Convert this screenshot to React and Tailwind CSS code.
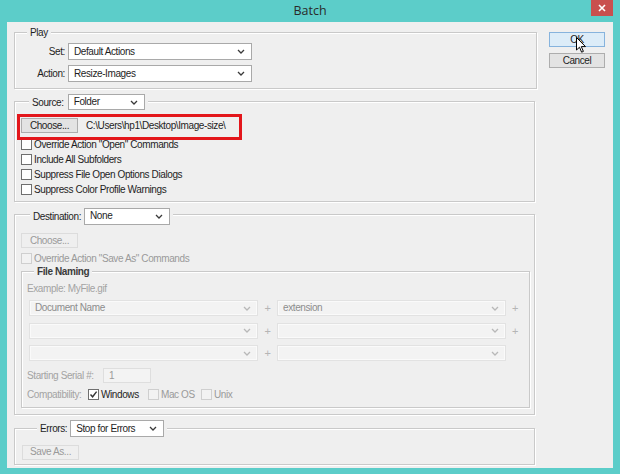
import React from "react";

function Chevron({ disabled }) {
  return (
    <svg width="8" height="5" viewBox="0 0 8 5" className="shrink-0">
      <path d="M1 1 L4 4 L7 1" fill="none" stroke={disabled ? "#b8b8b8" : "#3a3a3a"} strokeWidth="1.3" />
    </svg>
  );
}

function Select({ value, className, disabled }) {
  return (
    <div
      className={
        "flex items-center justify-between pl-[5px] pr-[6px] " +
        (disabled
          ? "border border-[#e2e2e2] bg-[#f3f3f3] text-[#8d8d8d] shadow-[inset_0_0_0_1px_#fafafa] "
          : "border border-[#a9a9a9] bg-white text-[#1e1e1e] ") +
        className
      }
    >
      <span className="leading-none">{value}</span>
      <Chevron disabled={disabled} />
    </div>
  );
}

function Check({ label, checked, disabled, className }) {
  return (
    <div className={"flex items-center gap-[2px] " + (className || "")}>
      <div
        className={
          "flex h-[11px] w-[11px] shrink-0 items-center justify-center " +
          (disabled ? "border border-[#cfcfcf] bg-[#f2f2f2]" : "border border-[#6f6f6f] bg-white")
        }
      >
        {checked && (
          <svg width="9" height="9" viewBox="0 0 9 9">
            <path d="M1.5 4.5 L3.6 6.8 L7.6 1.6" fill="none" stroke="#333" strokeWidth="1.4" />
          </svg>
        )}
      </div>
      <span className={"leading-none " + (disabled ? "text-[#9a9a9a]" : "text-[#1e1e1e]")}>{label}</span>
    </div>
  );
}

function Btn({ label, className, disabled }) {
  return (
    <div
      className={
        "flex items-center justify-center leading-none " +
        (disabled
          ? "border border-[#dcdcdc] bg-[#efefef] text-[#9a9a9a] "
          : "border border-[#adadad] bg-[#e3e3e3] text-[#1e1e1e] ") +
        className
      }
    >
      {label}
    </div>
  );
}

const groupBox = "border border-[#c9c9c9] shadow-[inset_1px_1px_0_#ffffff,1px_1px_0_#ffffff] ";

export default function App() {
  return (
    <div className="flex h-[474px] w-[620px] flex-col bg-[#5ccdc9] font-['Liberation_Sans',Arial,sans-serif] text-[10px] tracking-[-0.4px]">
      {/* Title bar */}
      <div className="relative flex h-[22px] shrink-0 items-center justify-center">
        <span className="font-['Open_Sans',sans-serif] text-[12.5px] tracking-normal text-[#2a2a2a]">Batch</span>
        <div className="absolute right-[7px] top-0 flex h-[16px] w-[22px] items-center justify-center bg-[#c9504f]">
          <svg width="8" height="8" viewBox="0 0 8 8">
            <path d="M1 1 L7 7 M7 1 L1 7" stroke="#ffffff" strokeWidth="1.6" />
          </svg>
        </div>
      </div>

      {/* Client area */}
      <div className="mx-[7px] mb-[7px] flex flex-1 gap-[12px] bg-[#efefef] pl-[7px] pt-[10px] pb-[3px]">
        {/* Left column */}
        <div className="flex w-[523px] flex-col">
          {/* Play */}
          <div className={groupBox + "flex flex-col pb-[6px]"}>
            <div className="-mt-[7px] ml-[12px] flex h-[12px] w-fit items-center bg-[#efefef] px-[3px] text-[#1e1e1e]">
              Play
            </div>
            <div className="mt-[5px] flex items-center gap-[3px]">
              <span className="w-[50px] text-right text-[#1e1e1e]">Set:</span>
              <Select value="Default Actions" className="h-[17px] w-[184px]" />
            </div>
            <div className="mt-[5px] flex items-center gap-[3px]">
              <span className="w-[50px] text-right text-[#1e1e1e]">Action:</span>
              <Select value="Resize-Images" className="h-[17px] w-[184px]" />
            </div>
          </div>

          {/* Source */}
          <div className={groupBox + "relative mt-[12px] mr-[2px] flex flex-col pb-[4px]"}>
            <div className="-mt-[8px] ml-[14px] flex h-[16px] w-fit items-center gap-[4px] bg-[#efefef] px-[3px]">
              <span className="text-[#1e1e1e]">Source:</span>
              <Select value="Folder" className="h-[16px] w-[77px]" />
            </div>
            <div className="mt-[8px] flex items-center gap-[8px] pl-[6px]">
              <Btn label="Choose..." className="h-[15px] w-[57px]" />
              <span className="text-[#1e1e1e]">C:\Users\hp1\Desktop\Image-size\</span>
            </div>
            <div className="mt-[4px] flex flex-col pl-[6px]">
              <Check label={'Override Action "Open" Commands'} className="h-[15px]" />
              <Check label="Include All Subfolders" className="h-[15px]" />
              <Check label="Suppress File Open Options Dialogs" className="h-[15px]" />
              <Check label="Suppress Color Profile Warnings" className="h-[15px]" />
            </div>
            {/* red annotation */}
            <div className="pointer-events-none absolute left-[2px] top-[12px] h-[26px] w-[225px] border-[3px] border-[#e3161b]" />
          </div>

          {/* Destination */}
          <div className={groupBox + "mt-[12px] mr-[2px] flex flex-col pb-[6px]"}>
            <div className="-mt-[7px] ml-[15px] flex h-[16px] w-fit items-center gap-[3px] bg-[#efefef] px-[3px]">
              <span className="text-[#1e1e1e]">Destination:</span>
              <Select value="None" className="h-[17px] w-[86px]" />
            </div>
            <div className="mt-[9px] pl-[6px]">
              <Btn label="Choose..." disabled className="h-[15px] w-[57px]" />
            </div>
            <div className="mt-[3px] pl-[6px]">
              <Check label={'Override Action "Save As" Commands'} disabled className="h-[15px]" />
            </div>
            {/* File naming */}
            <div className={groupBox + "ml-[6px] mt-[5px] flex w-[509px] flex-col pb-[5px]"}>
              <div className="-mt-[7px] ml-[12px] flex h-[12px] w-fit items-center bg-[#efefef] px-[3px] font-bold text-[#3a3a3a]">
                File Naming
              </div>
              <div className="mt-[5px] flex h-[12px] items-center pl-[5px] text-[#a3a3a3]">Example: MyFile.gif</div>
              <div className="mt-[6px] flex flex-col gap-[6px] pl-[7px]">
                {[
                  ["Document Name", "extension", true],
                  ["", "", true],
                  ["", "", false],
                ].map(([a, b, plus], i) => (
                  <div key={i} className="flex items-center">
                    <Select value={a} disabled className="h-[16px] w-[229px]" />
                    <span className="w-[19px] text-center text-[11px] text-[#b5b5b5]">+</span>
                    <Select value={b} disabled className="h-[16px] w-[229px]" />
                    {plus && <span className="w-[18px] text-center text-[11px] text-[#b5b5b5]">+</span>}
                  </div>
                ))}
              </div>
              <div className="mt-[6px] flex h-[15px] items-center pl-[5px]">
                <span className="w-[76px] text-[#a3a3a3]">Starting Serial #:</span>
                <div className="flex h-[15px] w-[48px] items-center border border-[#dedede] bg-[#f3f3f3] pl-[5px] text-[#9a9a9a]">
                  1
                </div>
              </div>
              <div className="mt-[5px] flex h-[14px] items-center pl-[5px]">
                <span className="w-[61px] text-[#a3a3a3]">Compatibility:</span>
                <Check label="Windows" checked className="w-[60px]" />
                <Check label="Mac OS" disabled className="w-[53px]" />
                <Check label="Unix" disabled />
              </div>
            </div>
          </div>

          {/* Errors */}
          <div className={groupBox + "mt-[13px] mr-[2px] flex flex-col pb-[4px]"}>
            <div className="-mt-[8px] ml-[22px] flex h-[16px] w-fit items-center gap-[3px] bg-[#efefef] px-[3px]">
              <span className="text-[#1e1e1e]">Errors:</span>
              <Select value="Stop for Errors" className="h-[17px] w-[94px]" />
            </div>
            <div className="mt-[8px] pl-[7px]">
              <Btn label="Save As..." disabled className="h-[15px] w-[57px]" />
            </div>
          </div>
        </div>

        {/* Right column */}
        <div className="flex w-[56px] flex-col gap-[6px] pt-0">
          <div className="relative">
            <div className="flex h-[15px] items-center justify-center border border-[#86b3dd] bg-[#dcecf8] leading-none text-[#1e1e1e]">
              OK
            </div>
            <svg
              width="11"
              height="17"
              viewBox="0 0 11 17"
              className="absolute left-[27px] top-[5px]"
            >
              <path
                d="M0.5 0.5 L0.5 13 L3.5 10.2 L5.6 15.2 L7.4 14.4 L5.3 9.6 L9.5 9.6 Z"
                fill="#ffffff"
                stroke="#000000"
                strokeWidth="1"
                strokeLinejoin="round"
              />
            </svg>
          </div>
          <div className="flex h-[15px] items-center justify-center border border-[#adadad] bg-[#e3e3e3] leading-none text-[#1e1e1e]">
            Cancel
          </div>
        </div>
      </div>
    </div>
  );
}
